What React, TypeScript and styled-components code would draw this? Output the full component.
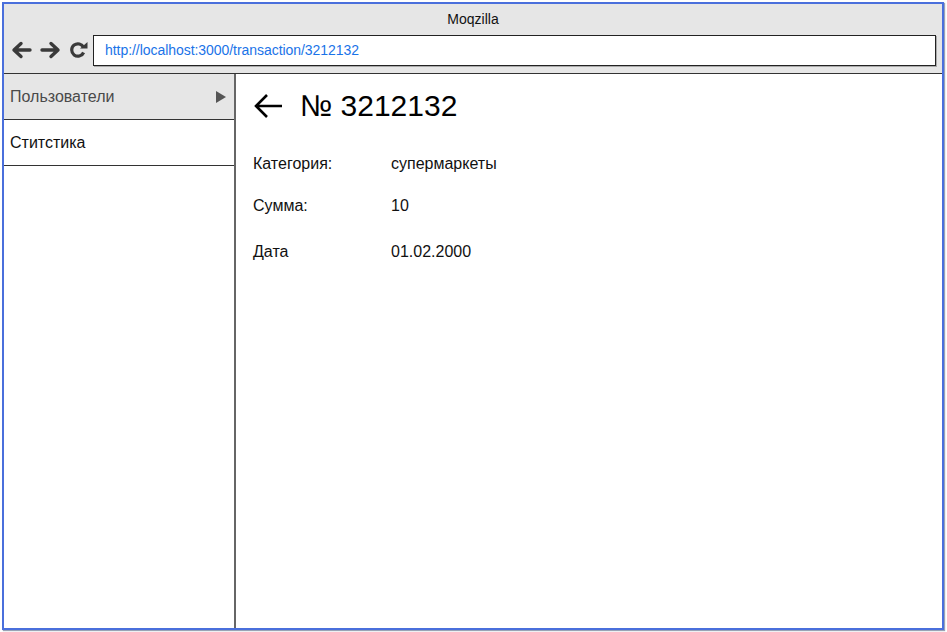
import React from "react";
import styled, { createGlobalStyle } from "styled-components";

const Global = createGlobalStyle`
  html, body { margin: 0; padding: 0; background: #ffffff; }
  body { font-family: "Liberation Sans", Arial, sans-serif; }
  * { box-sizing: border-box; }
`;

const Page = styled.div`
  width: 947px;
  height: 632px;
  padding: 2px 2px 0 2px;
`;

const Frame = styled.div`
  width: 942px;
  height: 628px;
  border: 2px solid #4a6fdc;
  box-shadow: 1px 1px 1px #9aa3b5;
  display: flex;
  flex-direction: column;
  background: #fff;
`;

const Header = styled.div`
  background: #e6e6e6;
  border-bottom: 1px solid #333;
  height: 70px;
  display: flex;
  flex-direction: column;
`;

const TitleBar = styled.div`
  height: 28px;
  display: flex;
  align-items: center;
  justify-content: center;
  font-size: 14px;
  color: #111;
  padding-top: 2px;
`;

const Toolbar = styled.div`
  display: flex;
  align-items: center;
  gap: 8px;
  padding: 0 6px 0 7px;
  height: 36px;
`;

const NavIcon = styled.svg`
  display: block;
  flex: none;
`;

const UrlBox = styled.div`
  flex: 1;
  height: 31px;
  margin-left: -3px;
  background: #fff;
  border: 1px solid #222;
  box-shadow: 1px 1px 0 #aaa;
  display: flex;
  align-items: center;
  padding-left: 11px;
  font-size: 14px;
  letter-spacing: -0.05px;
  color: #1a73e8;
`;

const Body = styled.div`
  flex: 1;
  display: flex;
  min-height: 0;
`;

const Sidebar = styled.div`
  width: 232px;
  border-right: 2px solid #666;
  display: flex;
  flex-direction: column;
`;

const NavItem = styled.div<{ $active?: boolean }>`
  height: 46px;
  border-bottom: 1px solid #333;
  background: ${(p) => (p.$active ? "#e6e6e6" : "#fff")};
  color: ${(p) => (p.$active ? "#4a4a4a" : "#111")};
  display: flex;
  align-items: center;
  justify-content: space-between;
  padding: 0 8px 0 6px;
  font-size: 16px;
`;

const Triangle = styled.span`
  width: 0;
  height: 0;
  border-top: 6px solid transparent;
  border-bottom: 6px solid transparent;
  border-left: 10px solid #555;
`;

const Content = styled.div`
  flex: 1;
  padding: 16px 0 0 17px;
  display: flex;
  flex-direction: column;
`;

const TitleRow = styled.div`
  display: flex;
  align-items: center;
  gap: 17px;
  height: 32px;
`;

const Title = styled.h1`
  margin: 0;
  font-weight: normal;
  font-size: 30px;
  color: #000;
  line-height: 1;
`;

const Fields = styled.div`
  display: grid;
  grid-template-columns: 138px auto;
  margin-top: 22px;
  font-size: 16px;
  color: #111;
`;

const Cell = styled.div<{ $h: number }>`
  height: ${(p) => p.$h}px;
  display: flex;
  align-items: center;
`;

const rows: [string, string, number][] = [
  ["Категория:", "супермаркеты", 39],
  ["Сумма:", "10", 46],
  ["Дата", "01.02.2000", 46],
];

export default function App() {
  return (
    <Page>
      <Global />
      <Frame>
        <Header>
          <TitleBar>Moqzilla</TitleBar>
          <Toolbar>
            <NavIcon width="21" height="18" viewBox="0 0 21 18">
              <path d="M19 9H4M10 2.5L3 9l7 6.5" fill="none" stroke="#3a3a3a" strokeWidth="3.4" strokeLinecap="round" strokeLinejoin="round" />
            </NavIcon>
            <NavIcon width="21" height="18" viewBox="0 0 21 18">
              <path d="M2 9h15M11 2.5L18 9l-7 6.5" fill="none" stroke="#3a3a3a" strokeWidth="3.4" strokeLinecap="round" strokeLinejoin="round" />
            </NavIcon>
            <NavIcon width="19" height="18" viewBox="0 0 19 18">
              <path d="M14.6 6.5A6.2 6.2 0 1 0 14.6 11.5" fill="none" stroke="#3a3a3a" strokeWidth="3.2" />
              <path d="M11 7.5L18.5 7.5 18.5 1z" fill="#3a3a3a" />
            </NavIcon>
            <UrlBox>http://localhost:3000/transaction/3212132</UrlBox>
          </Toolbar>
        </Header>
        <Body>
          <Sidebar>
            <NavItem $active>
              <span>Пользователи</span>
              <Triangle />
            </NavItem>
            <NavItem>
              <span>Ститстика</span>
            </NavItem>
          </Sidebar>
          <Content>
            <TitleRow>
              <NavIcon width="30" height="26" viewBox="0 0 30 26">
                <path d="M29 13H3M14 2L3 13l11 11" fill="none" stroke="#000" strokeWidth="2.6" />
              </NavIcon>
              <Title>№ 3212132</Title>
            </TitleRow>
            <Fields>
              {rows.map(([k, v, h]) => (
                <React.Fragment key={k}>
                  <Cell $h={h}>{k}</Cell>
                  <Cell $h={h}>{v}</Cell>
                </React.Fragment>
              ))}
            </Fields>
          </Content>
        </Body>
      </Frame>
    </Page>
  );
}
